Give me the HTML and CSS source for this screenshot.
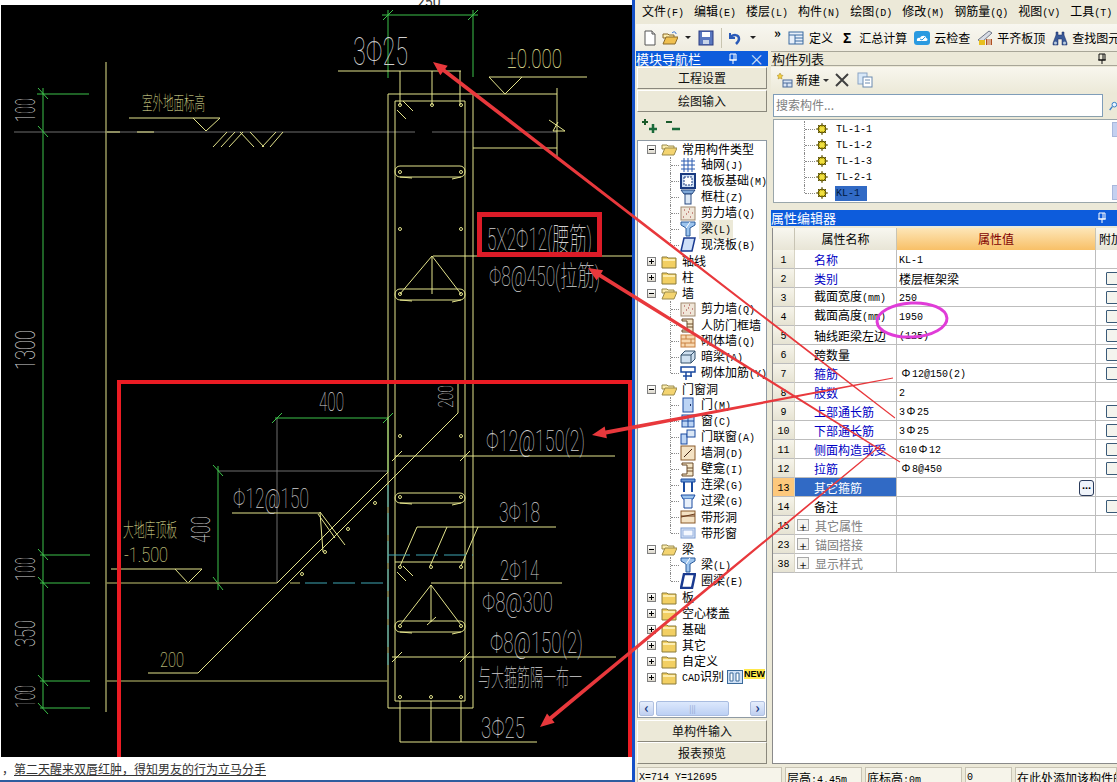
FILE: index.html
```html
<!DOCTYPE html>
<html lang="zh-CN">
<head>
<meta charset="utf-8">
<title>钢筋算量</title>
<link rel="stylesheet" href="styles.css">
</head>
<body>
<svg class="defs" width="0" height="0">
  <defs>
    <symbol id="fc" viewBox="0 0 16 16"><path d="M1 4h5l1 1h8v10H1z" fill="#f2cf62" stroke="#8a7a3a"/><path d="M2 6h12v2H2z" fill="#fdeeb0"/></symbol>
    <symbol id="fo" viewBox="0 0 16 16"><path d="M1 4h5l1 1h6v3H1z" fill="#fdeeb0" stroke="#9a8a4a"/><path d="M1 14l3-7h12l-3 7z" fill="#f4d470" stroke="#9a8a4a"/></symbol>
    <symbol id="grid" viewBox="0 0 16 16"><path d="M4 1v14M8 1v14M12 1v14M1 4h14M1 8h14M1 12h14" stroke="#2a5ab0" fill="none"/></symbol>
    <symbol id="raft" viewBox="0 0 16 16"><rect x="1" y="1" width="14" height="14" fill="#cfe0f5" stroke="#1a3a80" stroke-width="2"/><path d="M4 4h8v8H4z" fill="#fff" stroke="#1a3a80" stroke-dasharray="2 1"/></symbol>
    <symbol id="col" viewBox="0 0 16 16"><path d="M1 1h14l-3 4H4z" fill="#7fa8d8" stroke="#2a4a80"/><rect x="5" y="5" width="6" height="10" fill="#dbe7f5" stroke="#2a4a80"/></symbol>
    <symbol id="wall" viewBox="0 0 16 16"><rect x="1" y="2" width="14" height="13" fill="#f0e6d8" stroke="#a08a70"/><path d="M4 5h1M9 4h1M12 8h1M6 9h1M3 12h1M10 12h1M8 7h1" stroke="#a03030"/></symbol>
    <symbol id="beam" viewBox="0 0 16 16"><path d="M1 1h14v3l-5 3v8H6V7L1 4z" fill="#9cc4ee" stroke="#2a5a9a"/><path d="M6 7l4-6" stroke="#fff"/></symbol>
    <symbol id="slab" viewBox="0 0 16 16"><path d="M4 1h11l-3 13H1z" fill="#cfe0f8" stroke="#1a3a90" stroke-width="1.5"/></symbol>
    <symbol id="cfw" viewBox="0 0 16 16"><path d="M2 2h11v13H2v-2h5V4H2z" fill="#f4e6c8" stroke="#6a4a2a"/><path d="M7 7h6M7 10h6" stroke="#6a4a2a"/></symbol>
    <symbol id="brick" viewBox="0 0 16 16"><rect x="1" y="2" width="14" height="12" fill="#f8d8b0" stroke="#c88040"/><path d="M1 6h14M1 10h14M6 2v4M11 6v4M5 10v4" stroke="#c88040"/></symbol>
    <symbol id="dark" viewBox="0 0 16 16"><path d="M1 6l4-4h10v8l-4 4H1z" fill="#cfe0f0" stroke="#34506a"/><path d="M1 6h10v8M11 6l4-4" stroke="#34506a" fill="none"/></symbol>
    <symbol id="reb" viewBox="0 0 16 16"><path d="M1 2h14v5H1zM6 7v8M11 7v5M3 11h9" stroke="#1a4aa0" fill="none" stroke-width="1.5"/></symbol>
    <symbol id="door" viewBox="0 0 16 16"><rect x="3" y="1" width="10" height="14" fill="#bcd4f4" stroke="#1a4aa0"/><rect x="10" y="7" width="1" height="2" fill="#1a2a60"/></symbol>
    <symbol id="win" viewBox="0 0 16 16"><rect x="2" y="2" width="12" height="12" fill="#bcd4f4" stroke="#1a4aa0"/><path d="M8 2v12M2 8h12" stroke="#1a4aa0"/></symbol>
    <symbol id="dw" viewBox="0 0 16 16"><rect x="1" y="5" width="6" height="10" fill="#bcd4f4" stroke="#1a4aa0"/><rect x="7" y="1" width="8" height="7" fill="#dbe7f5" stroke="#1a4aa0"/></symbol>
    <symbol id="hole" viewBox="0 0 16 16"><rect x="1" y="1" width="14" height="14" fill="#f4e2c4" stroke="#8a5a2a"/><path d="M4 12l8-8" stroke="#402010"/></symbol>
    <symbol id="link" viewBox="0 0 16 16"><path d="M1 2h14v3H1z" fill="#6a9ad8" stroke="#1a4aa0"/><path d="M4 5v10M12 5v10" stroke="#1a4aa0" stroke-width="2"/></symbol>
    <symbol id="lint" viewBox="0 0 16 16"><path d="M1 2h14l-2 4H3z" fill="#9cc4ee" stroke="#1a4aa0"/><path d="M4 6v9h8V6" fill="#e8f0fa" stroke="#1a4aa0"/></symbol>
    <symbol id="sh" viewBox="0 0 16 16"><rect x="1" y="2" width="14" height="12" fill="#f4e2c4" stroke="#8a5a2a"/><path d="M1 8l14-3M1 7h14" stroke="#6a3a1a"/></symbol>
    <symbol id="sw" viewBox="0 0 16 16"><rect x="1" y="3" width="14" height="10" fill="#dbe7f8" stroke="#7a9ad0"/><rect x="3" y="5" width="10" height="6" fill="#f4f8ff" stroke="#9ab4e0"/></symbol>
    <symbol id="ring" viewBox="0 0 16 16"><path d="M4 1h11l-3 14H1z" fill="#fff" stroke="#1a3a90" stroke-width="2.5"/></symbol>
    <symbol id="gear" viewBox="0 0 12 12"><circle cx="6" cy="6" r="4" fill="#e8d020" stroke="#5a5000"/><path d="M6 0v12M0 6h12M2 2l8 8M10 2l-8 8" stroke="#5a5000"/><circle cx="6" cy="6" r="2.5" fill="#f0e040"/></symbol>
    <symbol id="pin" viewBox="0 0 10 12"><path d="M2 1h6v6H2zM1 7h8M5 7v4M6 1v6" stroke="currentColor" fill="none"/></symbol>
  </defs>
</svg>

<div class="page">
  <section class="left">
    <svg class="cad" width="632" height="782" viewBox="0 0 632 782" xmlns="http://www.w3.org/2000/svg">
      <text class="cut" x="417" y="7">250</text>
      <rect class="ink" x="1" y="5" width="631" height="752"/>

      <g class="ln-grey">
        <path d="M14 132H415M432 132H557"/>
        <path d="M277 418V583M218 471H388"/>
      </g>
      <g class="ln-green">
        <path d="M43 88V708"/>
        <path d="M37 94H89M40 555H90M40 583H90M40 681H90M40 708H90"/>
        <path d="M38 88L48 99M38 126L48 137M38 549L48 560M38 577L48 588M38 675L48 686M38 703L48 714"/>
        <path d="M388 10V78M473 10V77M382 15H478M383 20L393 10M468 20L478 10"/>
        <path d="M275 418H388V472M272 423L282 413M383 423L393 413"/>
        <path d="M218 466V590M213 465L223 476M213 577L223 590"/>
      </g>
      <g class="ln-yellow">
        <path d="M106 62V712"/>
        <path d="M107 132H120M137 132H154"/>
        <path d="M129 118H220M193 118L206 131L220 118"/>
        <path d="M213 147L227 132M221 147L235 132M229 147L243 132M240 132L254 147M250 132L264 147M262 147L276 132M270 147L283 132"/>
        <path d="M338 71H461M400 71V105M432 71V105M460 71V105"/>
        <path d="M489 77H587M489 77L505 94L522 77"/>
        <path d="M388 94H473V708H388ZM395 101H465V701H395Z"/>
        <path d="M473 94H557M557 88V156M473 148H557M549 120L565 131L553 131L558 122"/>
        <path d="M403 101L413 111M397 110L406 119"/>
        <rect x="395" y="166" width="70" height="11" rx="5"/>
        <path d="M400 177L412 178M461 177L452 179"/>
        <path d="M433 256H632M432 256L400 294M432 256L461 294M432 256V294"/>
        <rect x="395" y="289" width="70" height="11" rx="5"/>
        <path d="M400 300L412 301M461 300L452 302"/>
        <path d="M111 569H202M175 569L188 583L202 569"/>
        <path d="M458 384V413L198 673H148"/>
        <path d="M277 583L388 472"/>
        <path d="M232 513H320M320 512L323 552M320 512L345 545M318 514L335 538"/>
        <path d="M395 456H615M392 461L402 451M460 461L470 451"/>
        <rect x="395" y="493" width="70" height="10" rx="5"/>
        <path d="M400 503L412 504M461 503L452 505"/>
        <path d="M417 527H556M417 527L400 566M447 527L430 566M478 527L461 566"/>
        <path d="M395 562H465M403 566L413 576M397 572L406 581"/>
        <path d="M431 583H562M431 585L400 625M431 585L461 625M431 585V622"/>
        <rect x="395" y="621" width="70" height="11" rx="5"/>
        <path d="M400 632L412 633M461 632L452 634M427 625L436 617"/>
        <path d="M392 657H616M392 662L402 652M460 662L470 652"/>
        <path d="M400 701V742M431 701V742M461 701V742M400 742H537"/>
      </g>
      <g class="ln-olive">
        <path d="M106 583H277M106 681H388"/>
        <path d="M290 583H300"/>
      </g>
      <g class="ln-cyan">
        <path d="M305 583H388M388 485V665M388 555H473"/>
      </g>
      <g class="dots">
        <circle cx="400" cy="105" r="1.5"/><circle cx="432" cy="105" r="1.5"/><circle cx="461" cy="105" r="1.5"/>
        <circle cx="400" cy="172" r="1.5"/><circle cx="461" cy="172" r="1.5"/>
        <circle cx="400" cy="229" r="1.5"/><circle cx="461" cy="229" r="1.5"/>
        <circle cx="400" cy="294" r="1.5"/><circle cx="461" cy="294" r="1.5"/>
        <circle cx="400" cy="436" r="1.5"/><circle cx="461" cy="436" r="1.5"/>
        <circle cx="375" cy="503" r="1.5"/><circle cx="348" cy="529" r="1.5"/><circle cx="325" cy="552" r="1.5"/><circle cx="302" cy="574" r="1.5"/>
        <circle cx="400" cy="497" r="1.5"/><circle cx="461" cy="497" r="1.5"/>
        <circle cx="400" cy="567" r="1.5"/><circle cx="431" cy="567" r="1.5"/><circle cx="461" cy="567" r="1.5"/>
        <circle cx="400" cy="626" r="1.5"/><circle cx="461" cy="626" r="1.5"/>
        <circle cx="400" cy="697" r="1.5"/><circle cx="431" cy="697" r="1.5"/><circle cx="461" cy="697" r="1.5"/>
      </g>

      <g class="t-white">
        <text transform="translate(35 122) rotate(-90)" font-size="27" textLength="24" lengthAdjust="spacingAndGlyphs">100</text>
        <text transform="translate(35 370) rotate(-90)" font-size="27" textLength="40" lengthAdjust="spacingAndGlyphs">1300</text>
        <text transform="translate(35 581) rotate(-90)" font-size="27" textLength="24" lengthAdjust="spacingAndGlyphs">100</text>
        <text transform="translate(35 647) rotate(-90)" font-size="27" textLength="27" lengthAdjust="spacingAndGlyphs">350</text>
        <text transform="translate(35 708) rotate(-90)" font-size="27" textLength="23" lengthAdjust="spacingAndGlyphs">100</text>
        <text x="233" y="508" font-size="27" textLength="76" lengthAdjust="spacingAndGlyphs">Φ12@150</text>
        <text x="353" y="65" font-size="38" textLength="55" lengthAdjust="spacingAndGlyphs">3Φ25</text>
        <text x="487" y="250" font-size="31" textLength="105" lengthAdjust="spacingAndGlyphs">5X2Φ12(腰筋)</text>
        <text x="489" y="286" font-size="28" textLength="111" lengthAdjust="spacingAndGlyphs">Φ8@450(拉筋)</text>
        <text x="486" y="451" font-size="29" textLength="99" lengthAdjust="spacingAndGlyphs">Φ12@150(2)</text>
        <text x="499" y="522" font-size="27" textLength="41" lengthAdjust="spacingAndGlyphs">3Φ18</text>
        <text x="500" y="580" font-size="27" textLength="39" lengthAdjust="spacingAndGlyphs">2Φ14</text>
        <text x="482" y="612" font-size="27" textLength="71" lengthAdjust="spacingAndGlyphs">Φ8@300</text>
        <text x="490" y="653" font-size="29" textLength="93" lengthAdjust="spacingAndGlyphs">Φ8@150(2)</text>
        <text x="478" y="686" font-size="24" textLength="104" lengthAdjust="spacingAndGlyphs">与大箍筋隔一布一</text>
        <text x="481" y="738" font-size="29" textLength="44" lengthAdjust="spacingAndGlyphs">3Φ25</text>
        <text x="319" y="411" font-size="25" textLength="25" lengthAdjust="spacingAndGlyphs">400</text>
        <text transform="translate(453 408) rotate(-90)" font-size="21" textLength="23" lengthAdjust="spacingAndGlyphs">200</text>
        <text transform="translate(210 543) rotate(-90)" font-size="25" textLength="27" lengthAdjust="spacingAndGlyphs">400</text>
      </g>
      <g class="t-yellow">
        <text x="142" y="110" font-size="19" textLength="63" lengthAdjust="spacingAndGlyphs">室外地面标高</text>
        <text x="507" y="68" font-size="25" textLength="55" lengthAdjust="spacingAndGlyphs">±0.000</text>
        <text x="123" y="537" font-size="19" textLength="54" lengthAdjust="spacingAndGlyphs">大地库顶板</text>
        <text x="124" y="562" font-size="21" textLength="44" lengthAdjust="spacingAndGlyphs">-1.500</text>
        <text x="160" y="667" font-size="20" textLength="24" lengthAdjust="spacingAndGlyphs">200</text>
      </g>

      <rect class="mark thick" x="479.500" y="214.500" width="120" height="40"/>
      <path class="mark" d="M119 757V382H630V757"/>
    </svg>
    <p class="caption"><span class="caption-cut">，</span>第二天醒来双唇红肿，得知男友的行为立马分手</p>
  </section>

  <section class="app">
    <nav class="menu">
      <span>文件<i class="m">(F)</i></span><span>编辑<i class="m">(E)</i></span><span>楼层<i class="m">(L)</i></span><span>构件<i class="m">(N)</i></span><span>绘图<i class="m">(D)</i></span><span>修改<i class="m">(M)</i></span><span>钢筋量<i class="m">(Q)</i></span><span>视图<i class="m">(V)</i></span><span>工具<i class="m">(T)</i></span>
    </nav>
    <div class="toolbar">
      <svg class="ico" viewBox="0 0 16 16"><path d="M3 1h7l3 3v11H3z" fill="#fff" stroke="#555"/><path d="M10 1v3h3" fill="#ddd" stroke="#555"/></svg>
      <svg class="ico ml4" viewBox="0 0 16 16"><path d="M1 4h5l1 1h5v3H1z" fill="#fdeeb0" stroke="#8a6a2a"/><path d="M1 14l3-7h12l-3 7z" fill="#f0c050" stroke="#8a6a2a"/><path d="M10 3c2-2 4-1 4 1" stroke="#2a6ad0" fill="none"/></svg>
      <i class="caret ml7"></i>
      <svg class="ico ml7" viewBox="0 0 16 16"><rect x="1" y="1" width="14" height="14" fill="#5a78c0" stroke="#2a3a80"/><rect x="4" y="2" width="8" height="5" fill="#fff"/><rect x="5" y="10" width="6" height="4" fill="#c8d4e8"/></svg>
      <i class="sep ml7"></i>
      <svg class="ico ml5" viewBox="0 0 16 16"><path d="M3 3v5h5" fill="none" stroke="#2a5ab8" stroke-width="2"/><path d="M3 8c3-4 9-4 9 1 0 2-2 4-3 5" fill="none" stroke="#2a5ab8" stroke-width="2.5"/></svg>
      <i class="caret ml7"></i>
      <b class="more">»</b>
      <svg class="ico ml7" viewBox="0 0 16 16"><rect x="1" y="2" width="14" height="12" fill="#e8f0fa" stroke="#3a6aa0"/><path d="M1 5h14M7 5v9M7 8h8M7 11h8" stroke="#3a6aa0"/></svg>
      <span class="ml5">定义</span>
      <b class="sigma ml10">Σ</b>
      <span class="ml8">汇总计算</span>
      <svg class="ico ml7" viewBox="0 0 16 16"><rect x="0" y="1" width="16" height="14" rx="3" fill="#2a9ae0"/><path d="M3 11c-1-3 2-4 3-3 1-3 6-3 6 0 2 0 2 3 0 3z" fill="#fff"/><path d="M6 9l2 1 3-3" stroke="#2a9ae0" fill="none"/></svg>
      <span class="ml4">云检查</span>
      <svg class="ico ml7" viewBox="0 0 16 16"><path d="M1 10L12 1l3 2L5 12z" fill="#d8dce4" stroke="#707888"/><rect x="2" y="10" width="6" height="5" fill="#e8c020"/><rect x="9" y="9" width="6" height="6" fill="#b05020"/><path d="M11 9v6M13 9v6" stroke="#fff"/></svg>
      <span class="ml4">平齐板顶</span>
      <svg class="ico ml7" viewBox="0 0 16 16"><path d="M4 2h2v3h4V2h2v3l3 8v2h-5V9H6v6H1v-2l3-8z" fill="#3a5a98" stroke="#1a2a60" stroke-width=".5"/><circle cx="3.500" cy="13" r="1.500" fill="#bcd"/><circle cx="12.500" cy="13" r="1.500" fill="#bcd"/></svg>
      <span class="ml4 nowrap">查找图元</span>
    </div>

    <div class="main">
      <aside class="nav">
        <header class="title blue">
          <span>模块导航栏</span>
          <svg class="pin" viewBox="0 0 10 12"><use href="#pin"/></svg>
          <span class="close">×</span>
        </header>
        <button class="navbtn first">工程设置</button>
        <button class="navbtn second">绘图输入</button>
        <div class="navtools">
          <svg class="tool" viewBox="0 0 16 16"><path d="M3 1v6M0 4h6" stroke="#1a5a2a" stroke-width="2"/><path d="M11 6v9M7 11h8" stroke="#1a6a3a" stroke-width="2.500"/></svg>
          <svg class="tool" viewBox="0 0 16 16"><path d="M1 4h6" stroke="#1a5a2a" stroke-width="2"/><path d="M7 11h8" stroke="#1a6a3a" stroke-width="2.500"/></svg>
        </div>
        <div class="treebox">
          <div class="tree">
            <div class="r"><i class="exp minus"></i><svg class="fold"><use href="#fo"/></svg><span class="lab">常用构件类型</span></div>
            <div class="kids">
              <div class="r c"><svg class="ci"><use href="#grid"/></svg><span class="lab">轴网<i class="m">(J)</i></span></div>
              <div class="r c"><svg class="ci"><use href="#raft"/></svg><span class="lab">筏板基础<i class="m">(M)</i></span></div>
              <div class="r c"><svg class="ci"><use href="#col"/></svg><span class="lab">框柱<i class="m">(Z)</i></span></div>
              <div class="r c"><svg class="ci"><use href="#wall"/></svg><span class="lab">剪力墙<i class="m">(Q)</i></span></div>
              <div class="r c"><svg class="ci"><use href="#beam"/></svg><span class="lab sel">梁<i class="m">(L)</i></span></div>
              <div class="r c"><svg class="ci"><use href="#slab"/></svg><span class="lab">现浇板<i class="m">(B)</i></span></div>
            </div>
            <div class="r"><i class="exp plus"></i><svg class="fold"><use href="#fc"/></svg><span class="lab">轴线</span></div>
            <div class="r"><i class="exp plus"></i><svg class="fold"><use href="#fc"/></svg><span class="lab">柱</span></div>
            <div class="r"><i class="exp minus"></i><svg class="fold"><use href="#fo"/></svg><span class="lab">墙</span></div>
            <div class="kids">
              <div class="r c"><svg class="ci"><use href="#wall"/></svg><span class="lab">剪力墙<i class="m">(Q)</i></span></div>
              <div class="r c"><svg class="ci"><use href="#cfw"/></svg><span class="lab">人防门框墙</span></div>
              <div class="r c"><svg class="ci"><use href="#brick"/></svg><span class="lab">砌体墙<i class="m">(Q)</i></span></div>
              <div class="r c"><svg class="ci"><use href="#dark"/></svg><span class="lab">暗梁<i class="m">(A)</i></span></div>
              <div class="r c"><svg class="ci"><use href="#reb"/></svg><span class="lab">砌体加筋<i class="m">(Y)</i></span></div>
            </div>
            <div class="r"><i class="exp minus"></i><svg class="fold"><use href="#fo"/></svg><span class="lab">门窗洞</span></div>
            <div class="kids">
              <div class="r c"><svg class="ci"><use href="#door"/></svg><span class="lab">门<i class="m">(M)</i></span></div>
              <div class="r c"><svg class="ci"><use href="#win"/></svg><span class="lab">窗<i class="m">(C)</i></span></div>
              <div class="r c"><svg class="ci"><use href="#dw"/></svg><span class="lab">门联窗<i class="m">(A)</i></span></div>
              <div class="r c"><svg class="ci"><use href="#hole"/></svg><span class="lab">墙洞<i class="m">(D)</i></span></div>
              <div class="r c"><svg class="ci"><use href="#cfw"/></svg><span class="lab">壁龛<i class="m">(I)</i></span></div>
              <div class="r c"><svg class="ci"><use href="#link"/></svg><span class="lab">连梁<i class="m">(G)</i></span></div>
              <div class="r c"><svg class="ci"><use href="#lint"/></svg><span class="lab">过梁<i class="m">(G)</i></span></div>
              <div class="r c"><svg class="ci"><use href="#sh"/></svg><span class="lab">带形洞</span></div>
              <div class="r c"><svg class="ci"><use href="#sw"/></svg><span class="lab">带形窗</span></div>
            </div>
            <div class="r"><i class="exp minus"></i><svg class="fold"><use href="#fo"/></svg><span class="lab">梁</span></div>
            <div class="kids">
              <div class="r c"><svg class="ci"><use href="#beam"/></svg><span class="lab">梁<i class="m">(L)</i></span></div>
              <div class="r c"><svg class="ci"><use href="#ring"/></svg><span class="lab">圈梁<i class="m">(E)</i></span></div>
            </div>
            <div class="r"><i class="exp plus"></i><svg class="fold"><use href="#fc"/></svg><span class="lab">板</span></div>
            <div class="r"><i class="exp plus"></i><svg class="fold"><use href="#fc"/></svg><span class="lab">空心楼盖</span></div>
            <div class="r"><i class="exp plus"></i><svg class="fold"><use href="#fc"/></svg><span class="lab">基础</span></div>
            <div class="r"><i class="exp plus"></i><svg class="fold"><use href="#fc"/></svg><span class="lab">其它</span></div>
            <div class="r"><i class="exp plus"></i><svg class="fold"><use href="#fc"/></svg><span class="lab">自定义</span></div>
            <div class="r"><i class="exp plus"></i><svg class="fold"><use href="#fc"/></svg><span class="lab"><i class="m">CAD</i>识别</span>
              <svg class="cadico" viewBox="0 0 16 16"><rect x=".5" y="1.500" width="15" height="13" fill="#cfe0f5" stroke="#3a6a9a"/><path d="M3 4h3v8H3zM9 4h3v8H9z" fill="#fff" stroke="#3a6a9a"/></svg><em class="new">NEW</em>
            </div>
          </div>
          <div class="hscroll">
            <i class="sbtn">‹</i><i class="thumb">|||</i><i class="sbtn end">›</i>
          </div>
        </div>
        <button class="navbtn single">单构件输入</button>
        <button class="navbtn">报表预览</button>
      </aside>

      <div class="work">
        <header class="title plain">
          <span>构件列表</span>
          <svg class="pin" viewBox="0 0 10 12"><use href="#pin"/></svg>
        </header>
        <div class="listtools">
          <svg class="ico" viewBox="0 0 16 16"><path d="M3 1l1 2 2 .5-1.500 1.500.5 2-2-1-2 1 .5-2L0 3.500 2 3z" fill="#f4d040" stroke="#a08020" stroke-width=".5"/><rect x="6" y="8" width="9" height="7" fill="#d8e4f4" stroke="#4a6a9a"/><path d="M6 11h9M10 11v4" stroke="#4a6a9a"/></svg>
          <span class="ml3">新建</span><i class="caret small ml3"></i>
          <svg class="ico ml5" viewBox="0 0 16 16"><path d="M2 2l12 12M14 2L2 14" stroke="#404040" stroke-width="2"/></svg>
          <svg class="ico ml7" viewBox="0 0 16 16"><rect x="1" y="1" width="9" height="11" fill="#d8e8f8" stroke="#8aa4c4"/><rect x="6" y="5" width="9" height="10" fill="#fff" stroke="#6a8ab0"/><path d="M8 8h5M8 11h5" stroke="#6a8ab0"/></svg>
        </div>
        <div class="searchrow">
          <div class="search">搜索构件...</div>
          <svg class="lens" viewBox="0 0 12 14"><circle cx="8" cy="5" r="3.500" fill="#e8f4ff" stroke="#3a80c8" stroke-width="1.500"/><path d="M5 8L1 13" stroke="#3a80c8" stroke-width="2"/></svg>
        </div>
        <div class="list">
          <div class="li"><svg class="gear"><use href="#gear"/></svg><span class="m">TL-1-1</span></div>
          <div class="li"><svg class="gear"><use href="#gear"/></svg><span class="m">TL-1-2</span></div>
          <div class="li"><svg class="gear"><use href="#gear"/></svg><span class="m">TL-1-3</span></div>
          <div class="li"><svg class="gear"><use href="#gear"/></svg><span class="m">TL-2-1</span></div>
          <div class="li"><svg class="gear"><use href="#gear"/></svg><span class="m chosen">KL-1</span></div>
          <div class="vscroll"><i class="vb"></i><i class="vb lower"></i></div>
        </div>
        <header class="title blue prop">
          <span>属性编辑器</span>
          <svg class="pin" viewBox="0 0 10 12"><use href="#pin"/></svg>
        </header>
        <div class="gridwrap">
          <table class="grid">
            <colgroup><col class="c1"><col class="c2"><col class="c3"><col class="c4"></colgroup>
            <thead><tr><th></th><th>属性名称</th><th class="hot">属性值</th><th class="extra">附加</th></tr></thead>
            <tbody>
              <tr><td class="n"><i class="m">1</i></td><td class="k link">名称</td><td class="v"><i class="m">KL-1</i></td><td></td></tr>
              <tr><td class="n"><i class="m">2</i></td><td class="k link">类别</td><td class="v">楼层框架梁</td><td><i class="chk"></i></td></tr>
              <tr><td class="n"><i class="m">3</i></td><td class="k">截面宽度<i class="m">(mm)</i></td><td class="v"><i class="m">250</i></td><td><i class="chk"></i></td></tr>
              <tr><td class="n"><i class="m">4</i></td><td class="k">截面高度<i class="m">(mm)</i></td><td class="v"><i class="m">1950</i></td><td><i class="chk"></i></td></tr>
              <tr><td class="n"><i class="m">5</i></td><td class="k">轴线距梁左边</td><td class="v"><i class="m">(125)</i></td><td><i class="chk"></i></td></tr>
              <tr><td class="n"><i class="m">6</i></td><td class="k">跨数量</td><td class="v"></td><td><i class="chk"></i></td></tr>
              <tr><td class="n"><i class="m">7</i></td><td class="k link">箍筋</td><td class="v pad"><i class="rb">Φ</i><i class="m">12@150(2)</i></td><td><i class="chk"></i></td></tr>
              <tr><td class="n"><i class="m">8</i></td><td class="k link">肢数</td><td class="v"><i class="m">2</i></td><td></td></tr>
              <tr><td class="n"><i class="m">9</i></td><td class="k link">上部通长筋</td><td class="v"><i class="m">3</i><i class="rb">Φ</i><i class="m">25</i></td><td><i class="chk"></i></td></tr>
              <tr><td class="n"><i class="m">10</i></td><td class="k link">下部通长筋</td><td class="v"><i class="m">3</i><i class="rb">Φ</i><i class="m">25</i></td><td><i class="chk"></i></td></tr>
              <tr><td class="n"><i class="m">11</i></td><td class="k link">侧面构造或受</td><td class="v"><i class="m">G10</i><i class="rb">Φ</i><i class="m">12</i></td><td><i class="chk"></i></td></tr>
              <tr><td class="n"><i class="m">12</i></td><td class="k link">拉筋</td><td class="v pad"><i class="rb">Φ</i><i class="m">8@450</i></td><td><i class="chk"></i></td></tr>
              <tr class="active"><td class="n"><i class="m">13</i></td><td class="k">其它箍筋</td><td class="v"><b class="dots-btn">...</b></td><td></td></tr>
              <tr><td class="n"><i class="m">14</i></td><td class="k">备注</td><td class="v"></td><td><i class="chk"></i></td></tr>
              <tr class="grp"><td class="n"><i class="m">15</i></td><td class="k"><i class="box">+</i>其它属性</td><td class="v"></td><td></td></tr>
              <tr class="grp"><td class="n"><i class="m">23</i></td><td class="k"><i class="box">+</i>锚固搭接</td><td class="v"></td><td></td></tr>
              <tr class="grp"><td class="n"><i class="m">38</i></td><td class="k"><i class="box">+</i>显示样式</td><td class="v"></td><td></td></tr>
            </tbody>
          </table>
        </div>
      </div>
    </div>

    <footer class="status">
      <span class="s1 m">X=714 Y=12695</span>
      <span class="s2">层高<i class="m">:4.45m</i></span>
      <span class="s3">底标高<i class="m">:0m</i></span>
      <span class="s4 m">0</span>
      <span class="s5">在此处添加该构件的属性</span>
    </footer>
  </section>

  <svg class="overlay" width="1117" height="782" viewBox="0 0 1117 782" xmlns="http://www.w3.org/2000/svg">
    <polygon class="arrow" points="433,62 447.700,65.700 445.200,68.900 895.300,417.600 894.700,418.400 442.800,72.100 440.300,75.300"/>
    <polygon class="arrow" points="588,268 603.100,270.300 601,273.700 900.300,461.600 899.700,462.400 598.800,277.100 596.700,280.500"/>
    <polygon class="arrow" points="592,435 604.700,426.500 605.400,430.400 892.900,377.500 893.100,378.500 606.200,434.400 606.900,438.300"/>
    <polygon class="arrow" points="540,727 547,713.500 549.500,716.600 879.700,445.600 880.300,446.400 552.100,719.600 554.600,722.700"/>
    <ellipse class="ring" cx="912" cy="320" rx="35" ry="17" transform="rotate(-3 912 320)"/>
  </svg>
</div>
</body>
</html>
```

FILE: styles.css
```css
* { box-sizing: border-box; }
html, body { margin: 0; padding: 0; }
body {
  width: 1117px;
  height: 782px;
  overflow: hidden;
  background: #fff;
  font-family: "Noto Sans CJK SC", "Liberation Sans", sans-serif;
  font-size: 12px;
  line-height: 16px;
  color: #000;
}
i, em { font-style: normal; }
.defs { position: absolute; }
.page { position: relative; display: flex; width: 1117px; height: 782px; }
.m { font-family: "Liberation Mono", monospace; font-size: 10px; font-weight: 400; }
.nowrap { white-space: nowrap; }

/* drawing side */
.left { position: relative; width: 632px; height: 782px; background: #fff; border-bottom: 2px solid #2e5d9e; flex: none; }
.cad { position: absolute; left: 0; top: 0; }
.ink { fill: #000; }
.cut { font-family: "Roboto", sans-serif; font-size: 14px; fill: #333; }
.ln-grey path { stroke: #6e6e6e; fill: none; }
.ln-green path { stroke: #3cc24a; fill: none; }
.ln-yellow path, .ln-yellow rect { stroke: #e4e48c; fill: none; }
.ln-olive path { stroke: #84844c; fill: none; stroke-width: 1.500; }
.ln-cyan path { stroke: #3fa6b4; fill: none; stroke-dasharray: 22 6; }
.dots circle { stroke: #e4e48c; fill: none; }
.t-white text { fill: #d0d0d0; font-family: "Roboto", "Noto Sans CJK SC", sans-serif; font-weight: 100; }
.t-yellow text { fill: #f0f0a0; font-family: "Roboto", "Noto Sans CJK SC", sans-serif; font-weight: 100; }
.mark { fill: none; stroke: #ec1c24; stroke-width: 4; }
.mark.thick { stroke: #dc1c28; stroke-width: 5; }
.caption {
  position: absolute; left: 0; top: 761px; margin: 0; width: 632px; white-space: nowrap;
  color: #333; text-decoration: underline; padding-left: 2px;
}
.caption-cut { display: inline-block; width: 12px; }

/* application window */
.app {
  width: 485px; height: 782px; flex: none; display: flex; flex-direction: column;
  background: #ece9d8; border-left: 3px solid #1450c8; padding-left: 1px; overflow: hidden;
}
.menu { height: 24px; display: flex; gap: 10px; align-items: center; padding-left: 6px; white-space: nowrap; flex: none; }
.menu span { display: block; }
.toolbar {
  height: 27px; flex: none; display: flex; align-items: center; padding-left: 6px; white-space: nowrap;
  background: linear-gradient(#f8f7f0, #efece0);
}
.ico { width: 16px; height: 16px; flex: none; }
.ml3 { margin-left: 3px; } .ml4 { margin-left: 4px; } .ml5 { margin-left: 5px; }
.ml7 { margin-left: 7px; } .ml8 { margin-left: 8px; } .ml10 { margin-left: 10px; }
.caret { width: 0; height: 0; border: 3px solid transparent; border-top: 3px solid #222; border-bottom: 0; flex: none; }
.caret.small { border-top-color: #333; }
.sep { width: 1px; height: 20px; background: #c8c4b0; flex: none; }
.more { margin-left: 18px; font-size: 13px; line-height: 12px; align-self: flex-start; margin-top: 3px; width: 10px; font-weight: 700; }
.sigma { font-family: "Liberation Sans", sans-serif; font-size: 14px; width: 9px; }

.main { flex: 1; min-height: 0; display: flex; gap: 3px; padding-bottom: 3px; }

.title { height: 15px; display: flex; align-items: center; font-size: 13px; line-height: 15px; flex: none; white-space: nowrap; position: relative; }
.title.blue { background: #0d5cdc; color: #fff; }
.title.plain { background: #ece9d8; border-top: 1px solid #a8a698; border-bottom: 1px solid #a8a698; color: #111; padding-left: 1px; }
.pin { width: 10px; height: 12px; flex: none; margin-left: auto; color: #fff; }
.title.plain .pin { color: #111; margin-right: 10px; }
.title.prop .pin { margin-right: 10px; }
.nav .pin { margin-right: 11px; }
.close { color: #d8e4f8; font-size: 15px; margin-right: 4px; line-height: 15px; }

.nav { width: 132px; flex: none; display: flex; flex-direction: column; }
.navbtn {
  height: 22px; flex: none; padding: 0; margin: 0; width: 130px; margin-left: 1px;
  border: 1px solid; border-color: #fff #8a887c #8a887c #fff;
  background: #ece9d8; font: inherit; color: #111; display: block; text-align: center;
}
.navbtn.first, .navbtn.second { margin-top: 1px; }
.navbtn.single { margin-top: 2px; }
.navtools { height: 28px; flex: none; display: flex; gap: 7px; align-items: center; padding-left: 6px; }
.tool { width: 16px; height: 16px; }
.treebox {
  flex: 1; min-height: 0; margin-left: 1px; width: 130px; background: #fff;
  border: 1px solid #8f9aa4; display: flex; flex-direction: column; overflow: hidden;
}
.tree { flex: 1; min-height: 0; overflow: hidden; }
.r { position: relative; height: 16px; display: flex; align-items: center; white-space: nowrap; padding-left: 9px; }
.exp {
  position: relative; width: 9px; height: 9px; border: 1px solid #808080; flex: none;
  background: linear-gradient(#fff, #dcd8cc);
}
.exp::before { content: ""; position: absolute; left: 1px; top: 3px; width: 5px; height: 1px; background: #000; }
.exp.plus::after { content: ""; position: absolute; left: 3px; top: 1px; width: 1px; height: 5px; background: #000; }
.fold { width: 16px; height: 16px; margin-left: 5px; flex: none; }
.lab { margin-left: 5px; }
.lab.sel { background: #ece9d8; padding-right: 2px; margin-left: 3px; padding-left: 2px; }
.r.c { padding-left: 42px; }
.r.c::before { content: ""; position: absolute; left: 32px; top: 0; bottom: 0; border-left: 1px dotted #8a8a8a; }
.r.c:last-child::before { bottom: 8px; }
.r.c::after { content: ""; position: absolute; left: 33px; top: 8px; width: 8px; border-top: 1px dotted #8a8a8a; }
.ci { width: 16px; height: 16px; flex: none; }
.cadico { width: 16px; height: 16px; margin-left: 3px; flex: none; }
.new { background: #ffe84a; font-family: "Liberation Sans", sans-serif; font-size: 9px; font-weight: 700; line-height: 10px; margin-left: 1px; align-self: flex-start; }
.hscroll { height: 15px; flex: none; display: flex; align-items: stretch; gap: 2px; padding: 0 1px; margin-bottom: 1px; }
.sbtn {
  width: 15px; background: linear-gradient(#e6eefc, #c0d0f0); border: 1px solid #b0c0e0; border-radius: 2px;
  color: #1a3a80; font-weight: 700; font-size: 14px; line-height: 11px; text-align: center; flex: none;
}
.sbtn.end { margin-left: auto; }
.thumb {
  width: 73px; background: linear-gradient(#dce8fc, #bcd0f4); border: 1px solid #a8bce0; border-radius: 2px;
  color: #8aa0cc; font-size: 8px; line-height: 13px; text-align: center; flex: none;
}

.work { flex: 1; min-width: 0; display: flex; flex-direction: column; }
.listtools { height: 26px; flex: none; display: flex; align-items: center; padding-left: 6px; background: linear-gradient(#f8f6ee, #ece9d8); margin-top: 1px; }
.searchrow { height: 24px; flex: none; display: flex; align-items: flex-start; padding-left: 2px; margin-top: 1px; gap: 6px; }
.search { width: 331px; height: 23px; border: 1px solid #7f9db9; border-bottom-color: #8aa0ac; background: #fff; color: #808080; padding: 2px 0 0 2px; font-size: 12px; }
.lens { width: 8px; height: 14px; margin-top: 5px; flex: none; }
.list { position: relative; height: 84px; flex: none; margin-left: 2px; margin-top: 1px; background: #fff; border: 1px solid #9aa6aa; border-right: 0; padding-top: 1px; }
.li { position: relative; height: 16px; display: flex; align-items: center; padding-left: 42px; }
.li::before { content: ""; position: absolute; left: 30px; top: 0; bottom: 0; border-left: 1px dotted #8a8a8a; }
.li:nth-child(5)::before { bottom: 8px; }
.li::after { content: ""; position: absolute; left: 31px; top: 8px; width: 10px; border-top: 1px dotted #8a8a8a; }
.gear { width: 12px; height: 12px; flex: none; }
.li .m { margin-left: 8px; line-height: 15px; }
.li .m.chosen { background: #316ac5; color: #001a40; padding: 0 1px 0 1px; margin-left: 7px; width: 32px; }
.vscroll { position: absolute; right: 0; top: 2px; bottom: 2px; width: 5px; }
.vb { position: absolute; left: 0; top: 0; width: 5px; height: 15px; background: #c4d0f0; border: 1px solid #a8b8dc; border-right: 0; }
.vb.lower { top: auto; bottom: 0; }
.title.prop { margin-top: 7px; height: 16px; line-height: 14px; }

.gridwrap { flex: 1; min-height: 0; margin-top: 2px; margin-left: 1px; background: #fff; border-left: 1px solid #8a8a8a; border-bottom: 1px solid #8a8a8a; overflow: hidden; }
.grid { table-layout: fixed; width: 344px; border-collapse: separate; border-spacing: 0; }
.c1 { width: 22px; } .c2 { width: 102px; } .c3 { width: 199px; } .c4 { width: 21px; }
.grid th { height: 22px; padding: 0; font-weight: 400; font-size: 12px; line-height: 14px; background: linear-gradient(#f8f7f0, #e8e5d6); border-right: 1px solid #c8c4b4; white-space: nowrap; overflow: hidden; }
.grid th.hot { background: linear-gradient(#fde6b8, #f8c067); color: #800000; }
.grid th.extra { text-align: left; padding-left: 3px; border-right: 0; }
.grid td { height: 19px; padding: 1px 0 0; border-right: 1px solid #bdbdbd; border-bottom: 1px solid #bdbdbd; line-height: 14px; white-space: nowrap; overflow: hidden; }
.grid td i, .grid td b { line-height: 14px; }
.grid td:last-child { border-right: 0; padding-left: 10px; }
.grid td.n { background: linear-gradient(#f6f4ea, #e6e3d3); text-align: center; border-right: 1px solid #d8d4c4; }
.grid td.k { padding-left: 19px; }
.grid td.link { color: #0000c4; }
.grid td.v { padding-left: 2px; position: relative; }
.grid td.v.pad { padding-left: 3px; }
.rb { display: inline-block; width: 12px; text-align: center; font-size: 11px; }
.chk { display: block; width: 20px; height: 13px; border: 1px solid #3a5a78; background: #f4f4ee; border-radius: 1px; }
.active td.n { background: #fdc87c; }
.active td.k { background: #316ac5; color: #fff; }
.grid td .dots-btn {
  display: block; margin-left: auto; margin-right: 1px; width: 15px; height: 16px; border: 1px solid #2a3a5a; border-radius: 3px;
  background: #f0f4fa; font-family: "Liberation Sans", sans-serif; font-size: 11px; line-height: 9px; text-align: center;
}
.grp td.k { color: #808080; padding-left: 2px; }
.box { display: inline-block; width: 12px; height: 12px; border: 1px solid #a8a8a8; background: #f4f4f0; color: #111; font-size: 12px; line-height: 10px; text-align: center; margin-right: 6px; vertical-align: -1px; }

.status { height: 15px; flex: none; display: flex; gap: 3px; padding-left: 1px; overflow: hidden; background: #ece9d8; }
.status span { height: 20px; display: block; background: #f6f4ea; border: 1px solid #c8c4b4; border-bottom: 0; line-height: 19px; padding-left: 1px; white-space: nowrap; overflow: hidden; font-size: 12px; }
.status span.m { font-size: 10px; }
.s1 { width: 145px; } .s2 { width: 77px; } .s3 { width: 97px; } .s4 { width: 47px; } .s5 { flex: 1; }

/* annotations drawn over the screenshot */
.overlay { position: absolute; left: 0; top: 0; pointer-events: none; }
.arrow { fill: #e8383c; }
.ring { fill: none; stroke: #e03cd8; stroke-width: 3; }
```
